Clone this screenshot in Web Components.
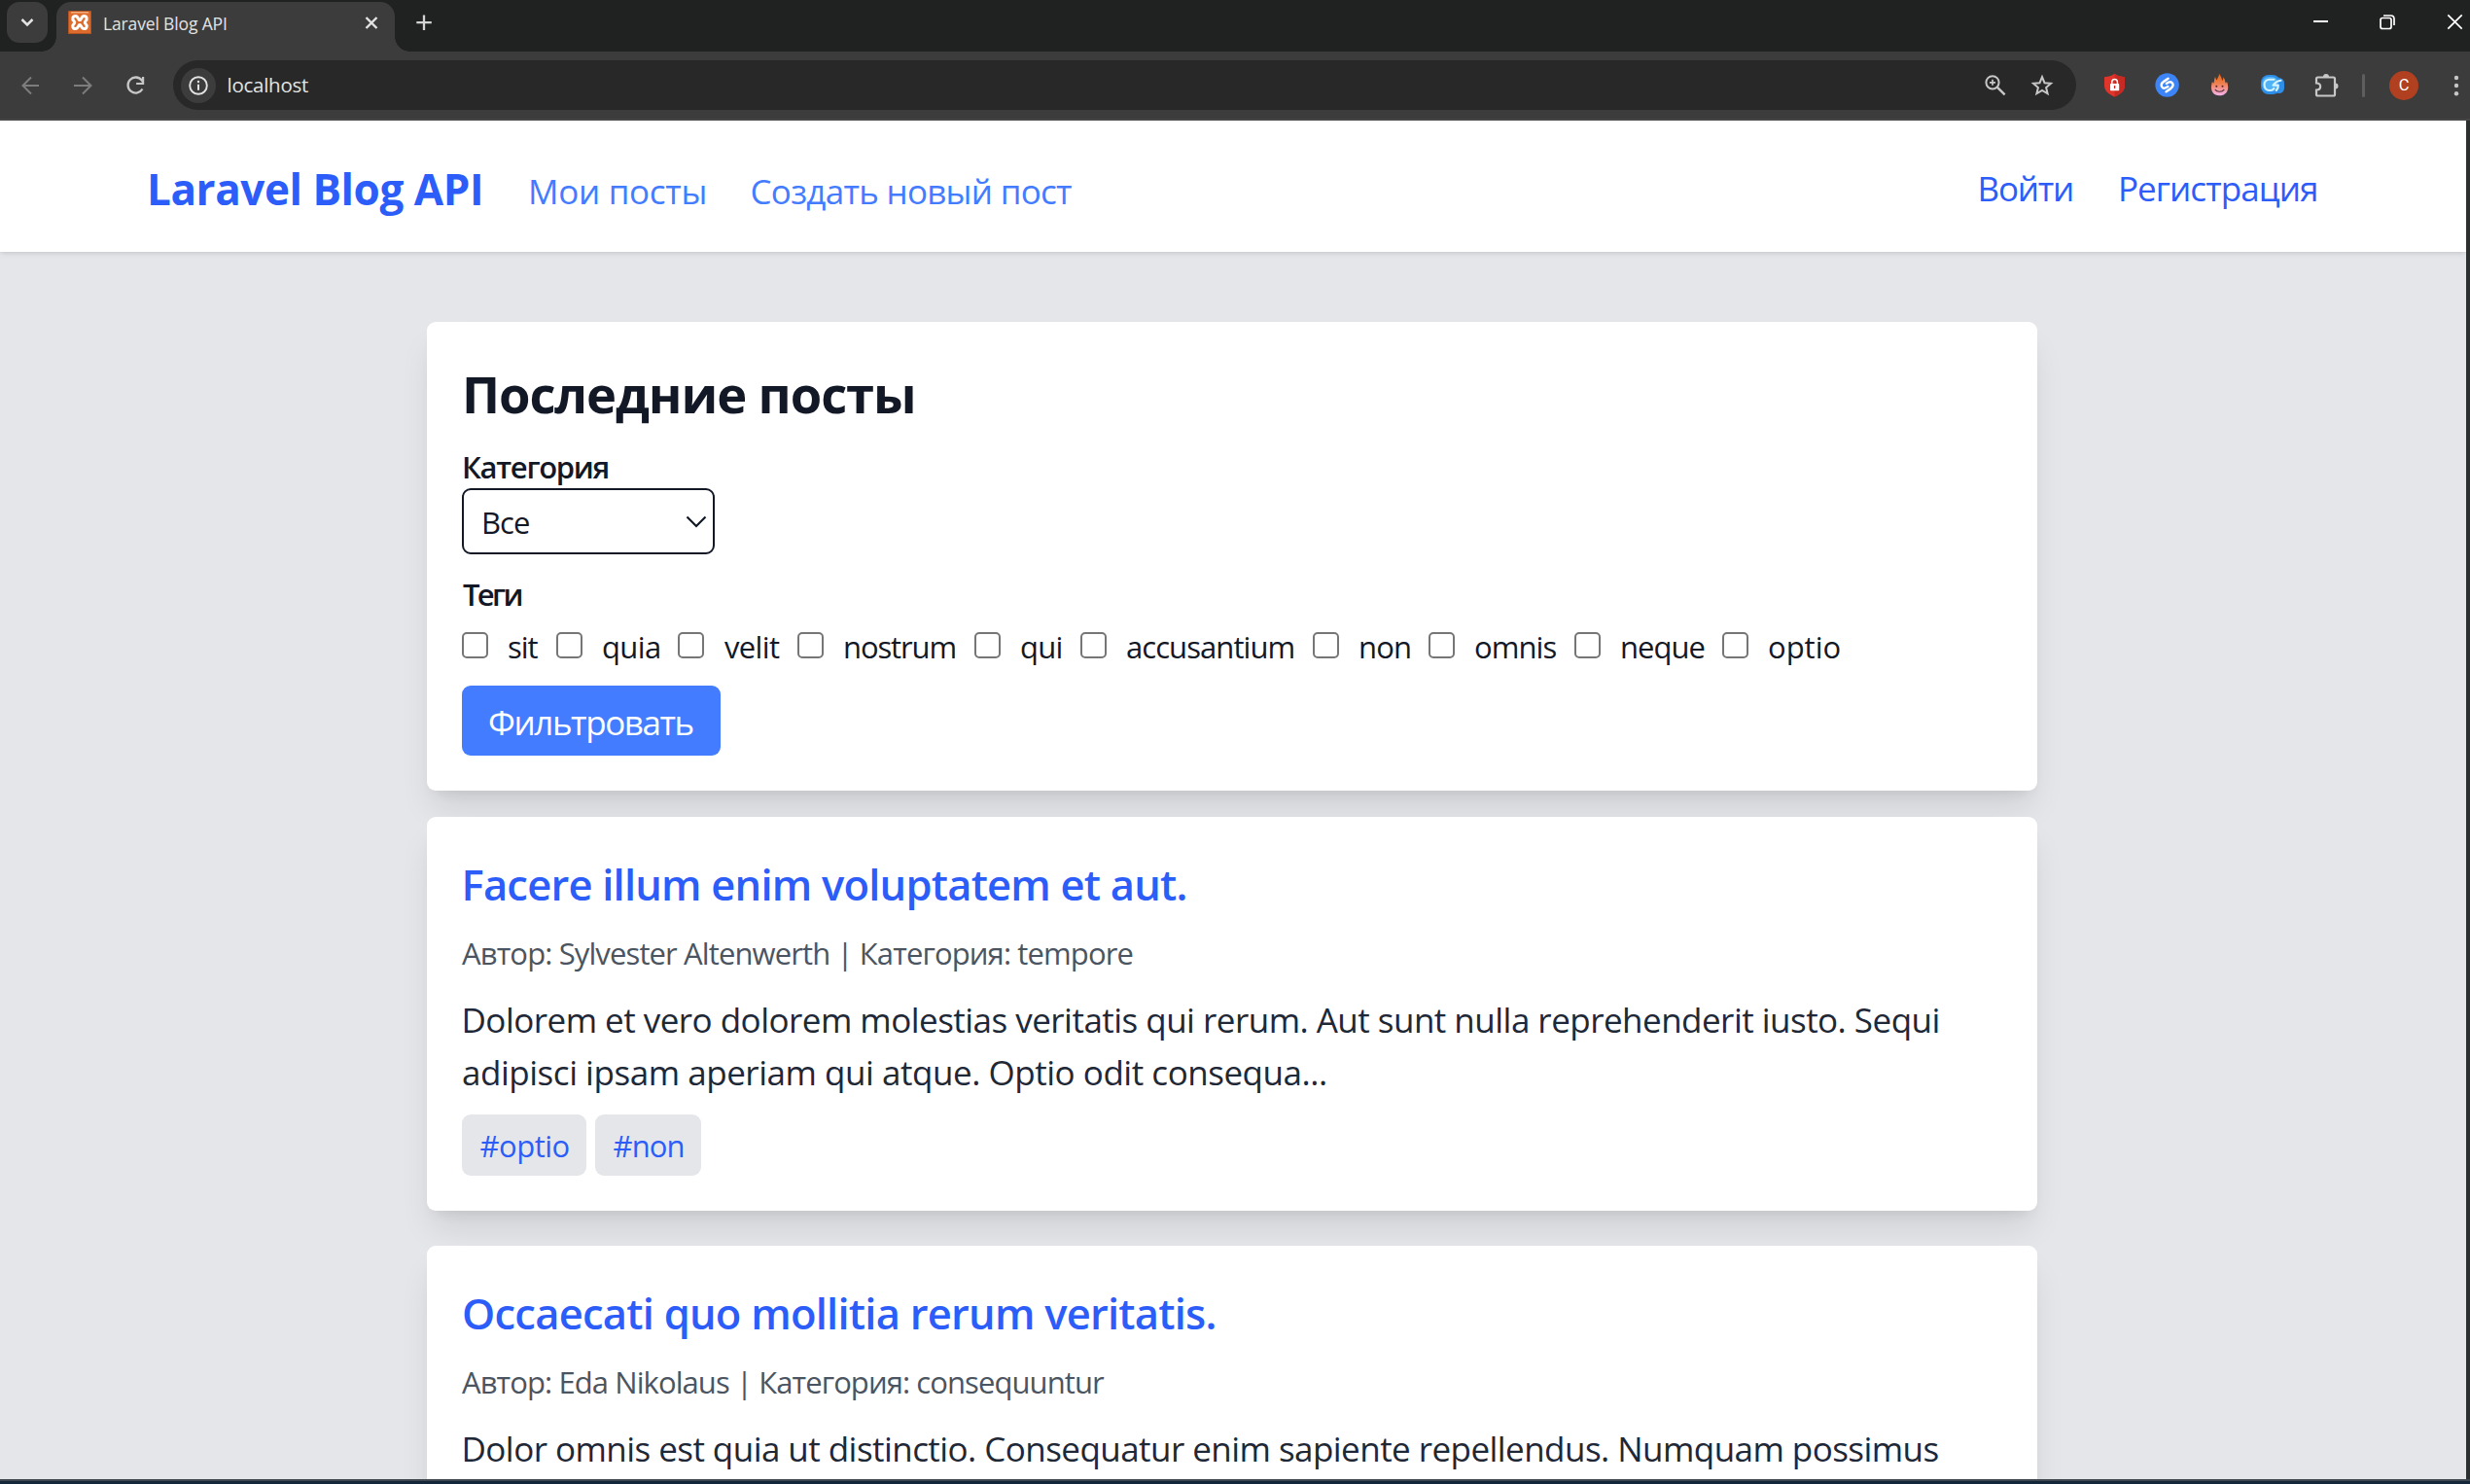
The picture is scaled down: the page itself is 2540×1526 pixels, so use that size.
<!DOCTYPE html>
<html lang="ru">
<head>
<meta charset="utf-8">
<title>Laravel Blog API</title>
<style>
html, body { margin: 0; height: 100%; overflow: hidden; }
body { font-family: "Open Sans", "Noto Sans", sans-serif; background: #1b2430; }
</style>
</head>
<body>
<blog-window></blog-window>
<script>
const define = (name, html, init) => {
  const tpl = document.createElement('template');
  tpl.innerHTML = html;
  customElements.define(name, class extends HTMLElement {
    constructor() {
      super();
      this.attachShadow({ mode: 'open' }).appendChild(tpl.content.cloneNode(true));
    }
    connectedCallback() { if (init) init.call(this, this.shadowRoot); }
  });
};

/* One line of text whose visible ink fills exactly the width given in "ink". */
const ctx = document.createElement('canvas').getContext('2d');
define('fit-text', `<style>
  :host { display: block; white-space: nowrap; flex: none; }
  span { display: block; width: max-content; }
</style><span><slot></slot></span>`, function (root) {
  const ink = parseFloat(this.getAttribute('ink'));
  const cs = getComputedStyle(this);
  const text = this.textContent;
  ctx.font = `${cs.fontWeight} ${cs.fontSize} ${cs.fontFamily}`;
  const m = ctx.measureText(text);
  const natural = m.actualBoundingBoxLeft + m.actualBoundingBoxRight;
  const ls = text.length > 1 ? (ink - natural) / (text.length - 1) : 0;
  this.style.width = ink + 'px';
  this.style.letterSpacing = ls.toFixed(3) + 'px';
  root.querySelector('span').style.marginLeft = m.actualBoundingBoxLeft.toFixed(2) + 'px';
});

/* ---------- browser chrome ---------- */
define('tab-strip', `
<style>
  :host { display: flex; height: 53px; background: #202221; color: #e3e3e3; box-sizing: border-box; }
  .search { margin: 2px 0 0 7px; width: 42px; height: 42px; border-radius: 13px; background: #3c3c3c; flex: none; }
  svg { display: block; flex: none; }
  .tab { margin: 2px 0 0 9px; width: 348px; height: 51px; box-sizing: border-box; background: #3c3c3c; border-radius: 15px 15px 0 0;
    display: flex; align-items: flex-start; padding: 9px 0 0 12px; position: relative; flex: none; }
  .tab::before, .tab::after { content: ""; position: absolute; bottom: 0; width: 15px; height: 15px; }
  .tab::before { left: -15px; background: radial-gradient(circle at 0 0, transparent 14.5px, #3c3c3c 15px); }
  .tab::after { right: -15px; background: radial-gradient(circle at 100% 0, transparent 14.5px, #3c3c3c 15px); }
  fit-text { font-size: 17.5px; line-height: 26px; margin: 0 0 0 13px; }
  .close { margin: 5px 0 0 142px; }
  .plus { margin: 15px 0 0 22px; }
  .win { margin-left: auto; display: flex; padding: 14px 7px 0 0; gap: 52px; }
</style>
<div class="search"><svg width="42" height="42" viewBox="0 0 42 42"><path d="M15.5 18l5.5 5.5L26.500 18" fill="none" stroke="#e3e3e3" stroke-width="2.5"/></svg></div>
<div class="tab">
  <svg width="24" height="24" viewBox="0 0 24 24"><rect width="24" height="24" rx="1.500" fill="#dd6b2d"/><rect x=".5" y=".5" width="23" height="23" rx="1.500" fill="none" stroke="#b4531f"/><path d="M3 1.800h18" stroke="#f4b183" stroke-width="1.400"/>
    <path d="M12 9.800C10.300 9.800 10.600 5.500 7.600 5.500C4.500 5.500 4 9 5.900 10.500C7 11.500 7 12.700 5.900 13.700C4 15.500 4.600 18.600 7.600 18.600C10.600 18.600 10.300 14.500 12 14.500C13.700 14.500 13.400 18.600 16.400 18.600C19.400 18.600 20 15.500 18.100 13.700C17 12.700 17 11.500 18.100 10.500C20 9 19.500 5.500 16.400 5.500C13.400 5.500 13.700 9.800 12 9.800Z" fill="none" stroke="#fff" stroke-width="3"/></svg>
  <fit-text ink="126">Laravel Blog API</fit-text>
  <svg class="close" width="14" height="16" viewBox="0 0 14 16"><path d="M1.500 2l11 11M12.500 2l-11 11" stroke="#e3e3e3" stroke-width="2.400"/></svg>
</div>
<svg class="plus" width="17" height="17" viewBox="0 0 17 17"><path d="M8 .5v15.500M.3 8.200h15.500" stroke="#d4d4d4" stroke-width="2.300"/></svg>
<div class="win">
  <svg width="17" height="18" viewBox="0 0 17 18"><path d="M2 8h15" stroke="#fff" stroke-width="2"/></svg>
  <svg width="18" height="18" viewBox="0 0 18 18"><rect x="2" y="4.500" width="11" height="11" rx="2" fill="none" stroke="#fff" stroke-width="1.700"/><path d="M5 2h7.500q3.500 0 3.500 3.500V12" fill="none" stroke="#fff" stroke-width="1.700"/></svg>
  <svg width="17" height="18" viewBox="0 0 17 18"><path d="M1.300 1.300l14.400 14.400M15.700 1.300L1.300 15.700" stroke="#fff" stroke-width="1.700"/></svg>
</div>`);

define('tool-bar', `
<style>
  :host { display: flex; height: 71px; box-sizing: border-box; background: #3c3c3c; border-bottom: 2px solid #474546; padding: 9px 0 9px 20px; align-items: center; }
  svg { display: block; flex: none; }
  .nav { display: flex; gap: 30px; width: 158px; flex: none; }
  .omni { width: 1957px; height: 51px; border-radius: 26px; background: #282828; display: flex; align-items: center; box-sizing: border-box; padding: 0 23px 0 8px; flex: none; }
  .info { width: 36px; height: 36px; border-radius: 50%; background: #3c3c3c; flex: none; margin-top: 1px; }
  fit-text { color: #e3e3e3; font-size: 20.500px; line-height: 28px; margin: -2px 0 0 12.500px; }
  .tools { margin-left: auto; display: flex; gap: 24px; }
  .ext { display: flex; align-items: center; margin-left: 27px; gap: 28px; }
  .bar { width: 3px; height: 24px; border-radius: 2px; background: #5e5e5e; margin-left: -5px; }
  .avatar { width: 30px; height: 30px; border-radius: 50%; background: #b0401f; color: #fff; font: 16.500px/30px Roboto, sans-serif; text-align: center; margin-left: -3px; }
</style>
<div class="nav">
  <svg width="24" height="24" viewBox="0 0 24 24"><path d="M12 3.500L3.500 12L12 20.500M3.500 12H20" fill="none" stroke="#7d7d7d" stroke-width="2"/></svg>
  <svg width="24" height="24" viewBox="0 0 24 24"><path d="M11 3.500L19.500 12L11 20.500M19.500 12H2" fill="none" stroke="#7d7d7d" stroke-width="2"/></svg>
  <svg width="24" height="24" viewBox="0 0 24 24"><path d="M18.500 15.500A8 8 0 1 1 17.800 6.500L19 8.500" fill="none" stroke="#c7c7c7" stroke-width="2.300"/><path d="M19.100 3v7h-7" fill="none" stroke="#c7c7c7" stroke-width="2.200"/></svg>
</div>
<div class="omni">
  <div class="info"><svg width="36" height="36" viewBox="0 0 36 36"><circle cx="18" cy="18" r="8.800" fill="none" stroke="#e3e3e3" stroke-width="1.900"/><path d="M18 16.800v6" stroke="#e3e3e3" stroke-width="2"/><circle cx="18" cy="14" r="1.200" fill="#e3e3e3"/></svg></div>
  <fit-text ink="82.5">localhost</fit-text>
  <div class="tools">
    <svg width="24" height="24" viewBox="0 0 24 24"><circle cx="9" cy="8.800" r="6.600" fill="none" stroke="#c7c7c7" stroke-width="2"/><path d="M13.800 13.600l7.800 7.800" stroke="#c7c7c7" stroke-width="2.400"/><path d="M9 5.800v6M6 8.800h6" stroke="#c7c7c7" stroke-width="1.700"/></svg>
    <svg width="24" height="24" viewBox="0 0 24 24"><path d="M12 3.200l2.500 6 6.500 .5-4.900 4.300 1.500 6.300-5.600-3.300-5.600 3.300 1.500-6.300L3 9.700l6.500-.5z" fill="none" stroke="#c7c7c7" stroke-width="2"/></svg>
  </div>
</div>
<div class="ext">
  <svg width="26" height="26" viewBox="0 0 26 26"><path d="M12.500 .8C15.500 3 19 4 23 4.200V13c0 5-4 9-10.500 11.500C6 22 2 18 2 13V4.200C6 4 9.500 3 12.500 .8z" fill="#e0352b"/><path d="M12.500 .8C15.500 3 19 4 23 4.200V13c0 5-4 9-10.500 11.500z" fill="#c62a22"/><rect x="8" y="11" width="9.200" height="7.200" rx=".8" fill="#fff"/><path d="M9.800 11.500V9.300a2.800 2.800 0 0 1 5.600 0v2.200" fill="none" stroke="#fff" stroke-width="1.500"/><path d="M12.600 13v3" stroke="#c62a22" stroke-width="1.400"/></svg>
  <svg width="26" height="26" viewBox="0 0 26 26"><circle cx="12.600" cy="12.500" r="12.200" fill="#3d85f7"/><path d="M13.600 5.800L9.400 8.600C6 11 5.900 13.600 8 15.200C9.600 16.300 11 15.800 13.400 14.100M11.600 19.200L15.800 16.400C19.200 14 19.300 11.400 17.200 9.800C15.600 8.700 14.200 9.200 11.800 10.900" fill="none" stroke="#fff" stroke-width="2.500" stroke-linecap="round"/></svg>
  <svg width="26" height="26" viewBox="0 0 26 26"><defs><linearGradient id="f" x1="0" y1="0" x2="0" y2="1"><stop offset="0" stop-color="#ef6410"/><stop offset=".45" stop-color="#f0804f"/><stop offset="1" stop-color="#f7b3ef"/></linearGradient></defs><path d="M12 .8C13.500 3 14.800 5 15.100 8C16 7 16.400 5.500 16.400 4.200C18.200 6.500 18 8.500 18.700 10.500C19.400 10.200 19.800 9.700 20 8.700C22.500 15 21.500 23.300 12.500 23.300C3.500 23.300 2.800 15 5 8.700C5.400 9.800 5.800 10.300 6.500 10.600C7.200 8 6.900 6 8.100 4C8.500 5.500 8.800 6.500 9.700 7.500C10.300 5 12 4 12 .8Z" fill="url(#f)"/><circle cx="9.300" cy="13.800" r="1" fill="#542b35"/><circle cx="15.500" cy="13.800" r="1" fill="#542b35"/><path d="M7.800 17c2 3 7.400 3 9.400 0" fill="none" stroke="#542b35" stroke-width="1.200"/></svg>
  <svg width="26" height="26" viewBox="0 0 26 26"><rect x="1" y="2" width="20" height="20" rx="8" fill="#2f8ee8"/><rect x="14" y="5" width="11" height="16" rx="5.500" fill="#2f8ee8"/><rect x="2.500" y="4" width="16" height="15" rx="6" fill="#4fb3f5"/><path d="M14.500 6.800H10C6.500 6.800 4.500 9 4.500 12C4.500 15.500 6.800 18 10 18C12 18 13.500 17.300 14.300 16M21.500 7.800C18 8.200 15.500 10 13.500 12.600H18.800C19 14.500 18.500 16.300 16.800 18" fill="none" stroke="#d6f4ff" stroke-width="2.100" stroke-linecap="round" stroke-linejoin="round"/></svg>
  <svg style="margin-left:2px" width="26" height="26" viewBox="0 0 26 26"><path d="M4 4.500h15.500q1.500 0 1.500 1.500v16q0 1.500-1.500 1.500H3.500q-1.500 0-1.500-1.500V17.500c5.500 0 5.500-7 0-7V6q0-1.500 1.500-1.500z" fill="none" stroke="#c7c7c7" stroke-width="2.200"/><path d="M9 4a3 3 0 0 1 6 0zM21.500 10.500a3 3 0 0 1 0 6z" fill="#c7c7c7"/></svg>
  <div class="bar"></div>
  <div class="avatar">C</div>
  <svg style="margin-left:7px" width="8" height="26" viewBox="0 0 8 26"><g fill="#c7c7c7"><circle cx="4" cy="5" r="2.200"/><circle cx="4" cy="13" r="2.200"/><circle cx="4" cy="21.200" r="2.200"/></g></svg>
</div>`);

/* ---------- page ---------- */
define('site-header', `
<style>
  :host { display: flex; height: 135px; box-sizing: border-box; padding: 4px 154px 0 154px; align-items: center; background: #fff; flex: none; position: relative;
    box-shadow: 0 2.250px 6.750px rgba(0,0,0,.1), 0 2.250px 4.500px -2.250px rgba(0,0,0,.1); color: #2c5df8; }
  .logo { font-size: 44px; font-weight: 700; line-height: 60px; }
  nav { display: flex; font-size: 35px; line-height: 54px; gap: 49px; }
  .main { color: #447cff; padding-top: 6px; margin-left: 52px; }
  .auth { margin-left: auto; gap: 50px; padding-top: 1px; }
</style>
<fit-text class="logo" ink="340">Laravel Blog API</fit-text>
<nav class="main"><fit-text ink="178.500">Мои посты</fit-text><fit-text ink="328.500">Создать новый пост</fit-text></nav>
<nav class="auth"><fit-text ink="94.500">Войти</fit-text><fit-text ink="201">Регистрация</fit-text></nav>`);

define('ui-card', `
<style>
  :host { display: flex; flex-direction: column; width: 1656px; box-sizing: border-box; padding: 36px; background: #fff; border-radius: 9px; flex: none;
    box-shadow: 0 22.500px 33.750px -6.750px rgba(0,0,0,.1), 0 9px 13.500px -9px rgba(0,0,0,.1); }
</style><slot></slot>`);

define('tag-check', `
<style>
  :host { display: flex; height: 44px; font-size: 31px; line-height: 44px; flex: none; }
  i { width: 27px; height: 27px; box-sizing: border-box; border: 2.200px solid #767676; border-radius: 5px; margin: 7px 21px 0 0; }
</style><i></i><slot></slot>`, function () { this.style.width = this.getAttribute('pitch') + 'px'; });

define('filter-panel', `
<style>
  :host { display: block; color: #131827; }
  .h { font-size: 52.500px; font-weight: 700; line-height: 72px; margin: 2px 0 0 4px; }
  .l { font-size: 31px; font-weight: 600; line-height: 44px; }
  .sel { width: 260px; height: 68px; box-sizing: border-box; border: 2px solid #131827; border-radius: 9px; display: flex; align-items: center; justify-content: space-between; padding: 1px 6px 0 21px; font-size: 31px; line-height: 44px; }
  .tags { display: flex; margin-top: 10px; }
  .btn { margin-top: 18px; width: 266px; height: 72px; box-sizing: border-box; padding: 3px 0 0 28px; border-radius: 9px; background: #447cff; color: #fff; font-size: 35px; line-height: 69px; }
</style>
<ui-card>
  <fit-text class="h" ink="460">Последние посты</fit-text>
  <fit-text class="l" style="margin:17px 0 0 2px" ink="148.500">Категория</fit-text>
  <div class="sel"><fit-text ink="46">Все</fit-text><svg width="22" height="14" viewBox="0 0 22 14"><path d="M1.500 1.500L11 11L20.500 1.500" fill="none" stroke="#131827" stroke-width="2.200"/></svg></div>
  <fit-text class="l" style="margin:19px 0 0 1px" ink="60.500">Теги</fit-text>
  <div class="tags">
    <tag-check pitch="97"><fit-text ink="30.500">sit</fit-text></tag-check>
    <tag-check pitch="125"><fit-text ink="58">quia</fit-text></tag-check>
    <tag-check pitch="123"><fit-text ink="57">velit</fit-text></tag-check>
    <tag-check pitch="182"><fit-text ink="113.500" style="margin-left:1px">nostrum</fit-text></tag-check>
    <tag-check pitch="109"><fit-text ink="41.500">qui</fit-text></tag-check>
    <tag-check pitch="239"><fit-text ink="171.500">accusantium</fit-text></tag-check>
    <tag-check pitch="119"><fit-text ink="51" style="margin-left:1px">non</fit-text></tag-check>
    <tag-check pitch="150"><fit-text ink="83.500">omnis</fit-text></tag-check>
    <tag-check pitch="152"><fit-text ink="84.500" style="margin-left:1px">neque</fit-text></tag-check>
    <tag-check pitch="121"><fit-text ink="72.500">optio</fit-text></tag-check>
  </div>
  <div class="btn"><fit-text ink="209.500">Фильтровать</fit-text></div>
</ui-card>`);

define('hash-tag', `
<style>
  :host { display: flex; height: 63px; box-sizing: border-box; padding: 1px 18.500px 0; border-radius: 9px; background: #e5e6ea; color: #2c5df8; font-size: 31px; line-height: 62px; flex: none; }
</style><slot></slot>`);

define('post-card', `
<style>
  :host { display: block; }
  .t { font-size: 43.500px; font-weight: 600; line-height: 62px; color: #2c5df8; margin: 3px 0 0 2px; }
  .m { font-size: 31px; line-height: 46px; color: #4b5562; margin: 16px 0 19px 0; word-spacing: 0; }
  .b { font-size: 35px; line-height: 54px; color: #1e2837; margin-left: 1px; }
  .g { display: flex; gap: 9px; margin-top: 16px; }
</style>
<ui-card>
  <div class="t"><slot name="title"></slot></div>
  <div class="m"><slot name="meta"></slot></div>
  <div class="b"><slot name="body"></slot></div>
  <div class="g"><slot name="tags"></slot></div>
</ui-card>`);

define('blog-page', `
<style>
  :host { display: flex; flex-direction: column; width: 2536px; height: 1397px; background: #e5e6ea; overflow: hidden; }
  main { display: flex; flex-direction: column; align-items: flex-start; margin: 72px 0 0 439px; }
  post-card { margin-top: 36px; }
  filter-panel + post-card { margin-top: 27px; }
  .in { margin-left: 1.500px; }
</style>
<site-header></site-header>
<main>
  <filter-panel></filter-panel>
  <post-card>
    <fit-text slot="title" class="in" ink="741">Facere illum enim voluptatem et aut.</fit-text>
    <fit-text slot="meta" ink="689.500">Автор: Sylvester Altenwerth | Категория: tempore</fit-text>
    <fit-text slot="body" class="in" ink="1516">Dolorem et vero dolorem molestias veritatis qui rerum. Aut sunt nulla reprehenderit iusto. Sequi</fit-text>
    <fit-text slot="body" ink="887">adipisci ipsam aperiam qui atque. Optio odit consequa...</fit-text>
    <hash-tag slot="tags"><fit-text ink="91">#optio</fit-text></hash-tag>
    <hash-tag slot="tags"><fit-text ink="72">#non</fit-text></hash-tag>
  </post-card>
  <post-card>
    <fit-text slot="title" ink="772.500">Occaecati quo mollitia rerum veritatis.</fit-text>
    <fit-text slot="meta" ink="661">Автор: Eda Nikolaus | Категория: consequuntur</fit-text>
    <fit-text slot="body" class="in" ink="1516">Dolor omnis est quia ut distinctio. Consequatur enim sapiente repellendus. Numquam possimus</fit-text>
  </post-card>
</main>`);

define('blog-window', `
<style>
  :host { display: flex; flex-direction: column; width: 2540px; height: 1526px; overflow: hidden; background: #14263a; }
  .view { display: flex; background: #2b2f2e; border-bottom: 2px solid #3e4650; height: 1397px; flex: none; }
</style>
<tab-strip></tab-strip>
<tool-bar></tool-bar>
<div class="view"><blog-page></blog-page></div>`);
</script>
</body>
</html>
